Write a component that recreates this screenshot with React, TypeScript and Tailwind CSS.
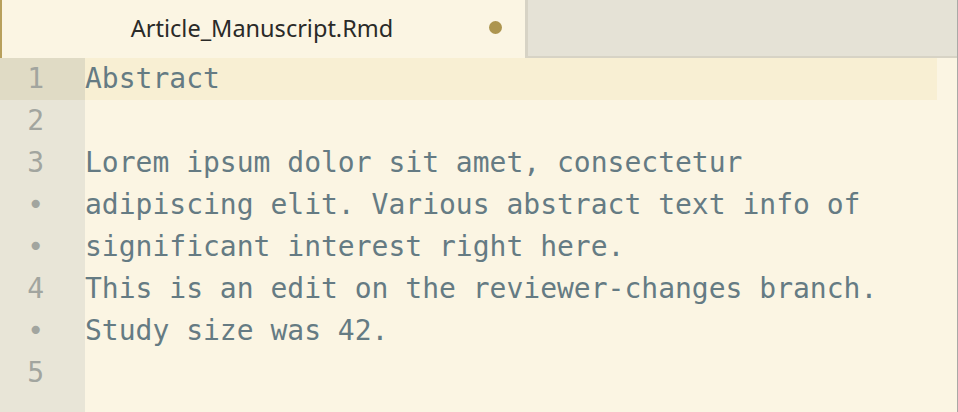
const rows = [
  { n: "1", text: "Abstract", active: true },
  { n: "2", text: "" },
  { n: "3", text: "Lorem ipsum dolor sit amet, consectetur" },
  { n: "•", text: "adipiscing elit. Various abstract text info of" },
  { n: "•", text: "significant interest right here." },
  { n: "4", text: "This is an edit on the reviewer-changes branch." },
  { n: "•", text: "Study size was 42." },
  { n: "5", text: "" },
];

export default function App() {
  return (
    <div className="flex h-[412px] w-[958px] flex-col overflow-hidden border-r border-[#a9a9a6] bg-[#fbf5e3]">
      {/* Tabs */}
      <div className="flex h-[58px] shrink-0">
        <div className="relative flex w-[525px] items-center justify-center border-l-2 border-[#b8a05c] bg-[#fbf5e3] pb-[1px] pr-[3px]">
          <span className="font-['Noto_Sans',sans-serif] text-[23.5px] text-[#2a2a28]">
            Article_Manuscript.Rmd
          </span>
          <span className="absolute left-[487px] top-[21px] h-[13px] w-[13px] rounded-full bg-[#ad954f]" />
        </div>
        <div className="flex-1 border-b-2 border-l-[3px] border-[#d7d3c5] bg-[#e5e2d6]" />
      </div>

      {/* Editor */}
      <div className="flex flex-1 font-['DejaVu_Sans_Mono',monospace] text-[28px] leading-[42px]">
        <div className="w-[85px] shrink-0 bg-[#e8e5d7] text-[#a2a59f]">
          {rows.map((r, i) => (
            <div
              key={i}
              className={
                r.active
                  ? "h-[42px] bg-[#e0dbc5] pr-[41px] text-right"
                  : "h-[42px] pr-[41px] text-right"
              }
            >
              {r.n}
            </div>
          ))}
        </div>
        <div className="flex-1 text-[#657b83]">
          {rows.map((r, i) => (
            <div
              key={i}
              className={
                r.active
                  ? "mr-[20px] h-[42px] whitespace-pre bg-[#f8efd3]"
                  : "h-[42px] whitespace-pre"
              }
            >
              {r.text}
            </div>
          ))}
        </div>
      </div>
    </div>
  );
}
